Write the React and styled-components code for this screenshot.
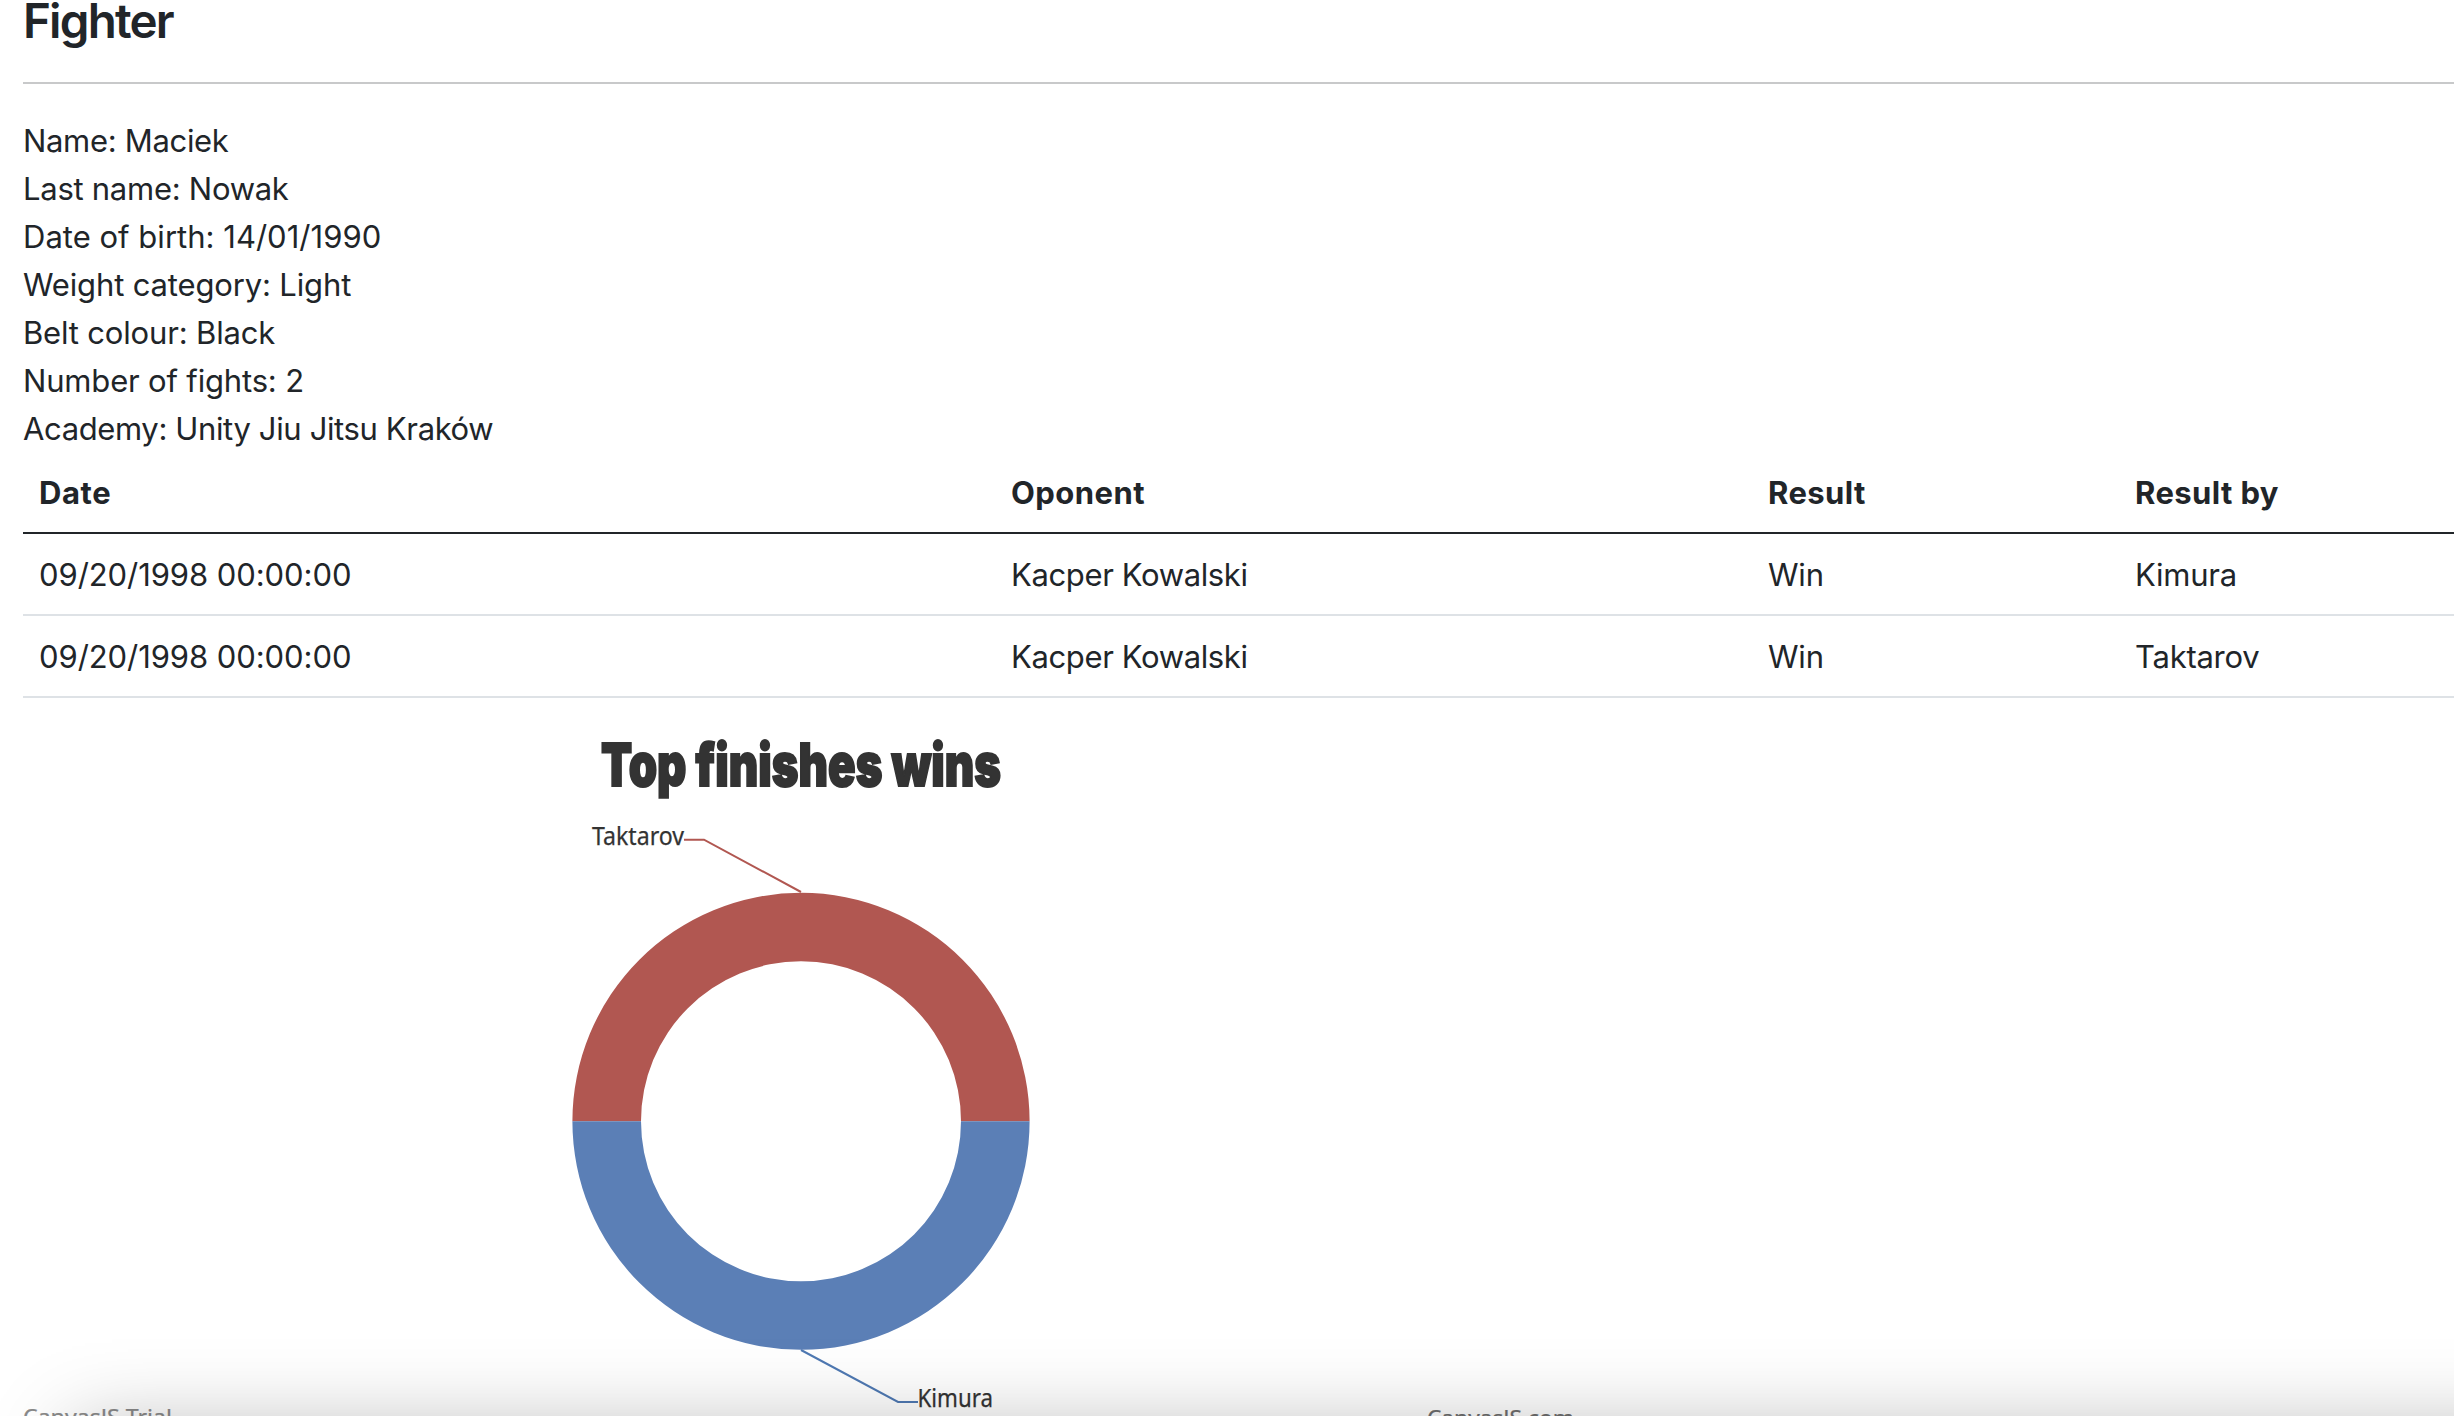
import React from "react";
import styled, { createGlobalStyle } from "styled-components";

const GlobalStyle = createGlobalStyle`
  *, *::before, *::after { box-sizing: border-box; }
  html, body { margin: 0; background: #fff; overflow: hidden; }
`;

const Page = styled.main`
  position: relative;
  height: 1416px;
  overflow: hidden;
  padding-left: 23px;
  color: #212529;
  font-family: Inter, "Liberation Sans", sans-serif;
  font-size: 31px;
  line-height: 48px;
`;

const Heading = styled.h3`
  margin: -8px 0 0;
  height: 90px;
  font-size: 47.5px;
  font-weight: 600;
  line-height: 57px;
  letter-spacing: -1.8px;
`;

const Divider = styled.hr`
  margin: 0 0 32px;
  border: 0;
  height: 2px;
  background: #c8c9ca;
`;

const Details = styled.div`
  display: flex;
  flex-direction: column;
`;

const Detail = styled.div`
  height: 48px;
  line-height: 50px;
  letter-spacing: ${(p) => p.$spacing ?? 0}px;
`;

const Table = styled.div`
  display: flex;
  flex-direction: column;
`;

const Row = styled.div`
  display: grid;
  grid-template-columns: 972px 757px 367px 1fr;
  border-bottom: 2px solid ${(p) => (p.$head ? "#212529" : "#dee2e6")};
  font-weight: ${(p) => (p.$head ? 700 : 400)};
`;

const Cell = styled.div`
  height: 80px;
  padding: 16px;
  line-height: 50px;
  white-space: nowrap;
  letter-spacing: ${(p) => p.$spacing ?? 0}px;
`;

const Chart = styled.svg`
  display: block;
  margin-left: -23px;
`;

const ChartTitle = styled.text`
  font-family: Inter, "Liberation Sans", sans-serif;
  font-size: 59px;
  font-weight: 900;
  fill: #333;
  stroke: #333;
  stroke-width: 2px;
`;

const ChartLabel = styled.text`
  font-family: "Noto Sans", "Open Sans", sans-serif;
  font-size: ${(p) => p.$size ?? 24.5}px;
  fill: ${(p) => p.$color ?? "#333"};
  stroke: ${(p) => p.$color ?? "#333"};
  stroke-width: 0.25px;
`;

const Shadow = styled.div`
  position: absolute;
  left: 72px;
  top: 1430px;
  width: 2700px;
  height: 500px;
  box-shadow: 0 0 80px rgba(0, 0, 0, 0.29);
  pointer-events: none;
`;

const details = [
  ["Name: Maciek", -0.32],
  ["Last name: Nowak", -0.27],
  ["Date of birth: 14/01/1990", 0.02],
  ["Weight category: Light", -0.15],
  ["Belt colour: Black", -0.17],
  ["Number of fights: 2", -0.17],
  ["Academy: Unity Jiu Jitsu Kraków", -0.37],
];

const headings = [
  ["Date", 0.6],
  ["Oponent", 0.45],
  ["Result", 0.4],
  ["Result by", 0.4],
];

const fights = [
  ["09/20/1998 00:00:00", "Kacper Kowalski", "Win", "Kimura"],
  ["09/20/1998 00:00:00", "Kacper Kowalski", "Win", "Taktarov"],
];

const spacings = [-0.07, -0.37, -0.2, -0.25];
const fit = "spacingAndGlyphs";

function FinishesChart() {
  return (
    <Chart width="2454" height="718" viewBox="0 698 2454 718">
      <ChartTitle x="601" y="786" textLength="400" lengthAdjust={fit}>Top finishes wins</ChartTitle>
      <path d="M572.4 1121.3A228.6 228.6 0 0 1 1029.6 1121.3H961A160 160 0 0 0 641 1121.3Z" fill="#b15751" />
      <path d="M572.4 1121.3A228.6 228.6 0 0 0 1029.6 1121.3H961A160 160 0 0 1 641 1121.3Z" fill="#5b7fb6" />
      <path d="M801 892L704 839.7H684" fill="none" stroke="#b15751" strokeWidth="2" />
      <path d="M801 1350L898 1402H918" fill="none" stroke="#4f79b3" strokeWidth="2" />
      <ChartLabel x="592" y="845" textLength="92" lengthAdjust={fit}>Taktarov</ChartLabel>
      <ChartLabel x="917.5" y="1407" textLength="75.5" lengthAdjust={fit}>Kimura</ChartLabel>
      <ChartLabel x="23" y="1424.5" $size={22} $color="#8a8a8a" textLength="149" lengthAdjust={fit}>CanvasJS Trial</ChartLabel>
      <ChartLabel x="1427" y="1426" $size={22} $color="#6e6e6e" textLength="147" lengthAdjust={fit}>CanvasJS.com</ChartLabel>
    </Chart>
  );
}

export default function App() {
  return (
    <Page>
      <GlobalStyle />
      <Heading>Fighter</Heading>
      <Divider />
      <Details>
        {details.map(([text, spacing]) => (
          <Detail key={text} $spacing={spacing}>{text}</Detail>
        ))}
      </Details>
      <Table>
        <Row $head>
          {headings.map(([title, spacing]) => (
            <Cell key={title} $spacing={spacing}>{title}</Cell>
          ))}
        </Row>
        {fights.map((fight, index) => (
          <Row key={index}>
            {fight.map((value, column) => (
              <Cell key={column} $spacing={spacings[column]}>{value}</Cell>
            ))}
          </Row>
        ))}
      </Table>
      <FinishesChart />
      <Shadow />
    </Page>
  );
}
